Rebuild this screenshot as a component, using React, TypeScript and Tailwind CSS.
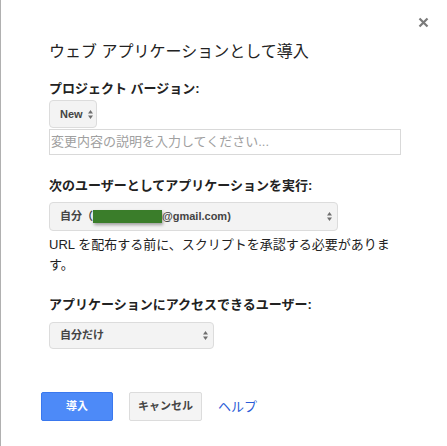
import React from "react";

const F = "font-['Liberation_Sans','Noto_Sans_CJK_JP',sans-serif]";

function UpDown({ className = "" }: { className?: string }) {
  return (
    <svg width="5" height="9" viewBox="0 0 5 9" className={className}>
      <path d="M0 3.6 L2.5 0 L5 3.6 Z" fill="#6f6f6f" />
      <path d="M0 5.4 L5 5.4 L2.5 9 Z" fill="#6f6f6f" />
    </svg>
  );
}

export default function App() {
  return (
    <div className={`${F} relative w-[447px] h-[446px] bg-white border-l border-[#b0b0b0] overflow-hidden`}>
      <button className="absolute left-[416px] top-[16px] w-[12px] h-[12px] flex items-center justify-center">
        <svg width="11" height="11" viewBox="0 0 11 11">
          <path d="M1.5 1.5 L9.5 9.5 M9.5 1.5 L1.5 9.5" stroke="#7a7a7a" strokeWidth="2.2" />
        </svg>
      </button>

      <div className="pl-[48px] pt-[42px] flex flex-col">
        <h1 className="text-[16px] leading-[20px] text-[#222] font-normal">ウェブ アプリケーションとして導入</h1>

        <div className="mt-[19px] text-[13px] leading-[16px] font-bold text-[#222]">プロジェクト バージョン:</div>

        <div className="mt-[3px] w-[48px] h-[28px] rounded-[4px] border border-[#dcdcdc] bg-[#f3f3f3] flex items-center pl-[10px] gap-[5px]">
          <span className="text-[11px] font-bold text-[#444]">New</span>
          <UpDown />
        </div>

        <div className="mt-[1px] w-[352px] h-[26px] border border-[#d9d9d9] flex items-center pl-[1px]">
          <span className="text-[13px] text-[#a0a0a0] whitespace-nowrap">変更内容の説明を入力してください...</span>
        </div>

        <div className="mt-[23px] text-[13px] leading-[16px] font-bold text-[#222]">次のユーザーとしてアプリケーションを実行:</div>

        <div className="mt-[8px] w-[289px] h-[29px] rounded-[4px] border border-[#dcdcdc] bg-[#f3f3f3] flex items-center justify-between pl-[10px] pr-[5px]">
          <span className="text-[11px] font-bold text-[#444] flex items-center whitespace-nowrap">
            自分（
            <span className="inline-block w-[69px] h-[13px] bg-[#3a7d2a] shadow-[1px_2px_3px_rgba(0,0,0,0.35)]"></span>
            @gmail.com)
          </span>
          <UpDown />
        </div>

        <p className="mt-[4px] w-[352px] text-[13px] leading-[20px] text-[#222]">
          URL を配布する前に、スクリプトを承認する必要があります。
        </p>

        <div className="mt-[22px] text-[13px] leading-[16px] font-bold text-[#222]">アプリケーションにアクセスできるユーザー:</div>

        <div className="mt-[9px] w-[165px] h-[27px] rounded-[4px] border border-[#dcdcdc] bg-[#f3f3f3] flex items-center justify-between pl-[10px] pr-[5px]">
          <span className="text-[11px] font-bold text-[#444]">自分だけ</span>
          <UpDown />
        </div>

        <div className="mt-[43px] -ml-[8px] flex items-center gap-[16px]">
          <button className="w-[72px] h-[29px] rounded-[2px] bg-[#4d8af8] border border-[#3a78ee] text-white text-[11px] font-bold flex items-center justify-center">
            導入
          </button>
          <button className="w-[73px] h-[29px] rounded-[2px] bg-[#f4f4f4] border border-[#dcdcdc] text-[#444] text-[11px] font-bold flex items-center justify-center">
            キャンセル
          </button>
          <a className="text-[13px] text-[#2a5bd7]">ヘルプ</a>
        </div>
      </div>
    </div>
  );
}
